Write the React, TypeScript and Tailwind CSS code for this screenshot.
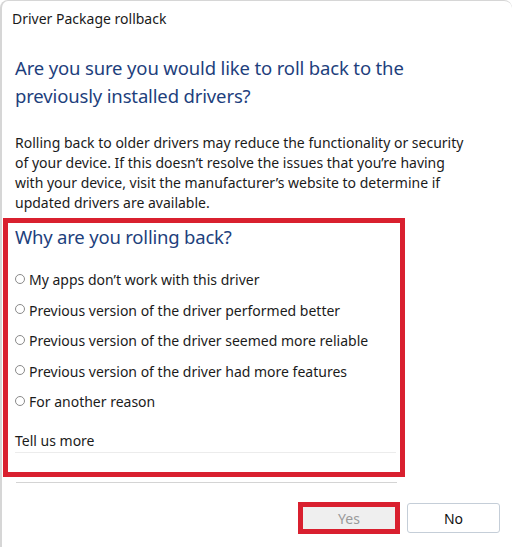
import React from "react";

const reasons = [
  "My apps don\u2019t work with this driver",
  "Previous version of the driver performed better",
  "Previous version of the driver seemed more reliable",
  "Previous version of the driver had more features",
  "For another reason",
];

function Radio({ label }: { label: string }) {
  return (
    <label className="flex items-center gap-[4px] text-[14px] leading-[20px] text-[#1b1b1b]">
      <span className="mt-[-3px] h-[10px] w-[10px] shrink-0 rounded-full border border-[#8a8a8a] bg-white" />
      <span>{label}</span>
    </label>
  );
}

export default function App() {
  return (
    <div
      className="h-[547px] w-[512px] overflow-hidden bg-white"
      style={{ fontFamily: '"Noto Sans", "Open Sans", sans-serif' }}
    >
      <div className="flex h-full flex-col rounded-tl-[8px] rounded-tr-[8px] border-l-2 border-t border-[#d6d6d6] pl-[13px]">
        {/* title bar */}
        <div className="ml-[-3px] pt-[8px] text-[14px] leading-[20px] text-[#1a1a1a]">Driver Package rollback</div>

        {/* question */}
        <h1 className="mt-[25px] text-[18.5px] font-normal leading-[28px] tracking-[-0.15px] text-[#1e3f7d]">
          Are you sure you would like to roll back to the
          <br />
          previously installed drivers?
        </h1>

        <p className="mt-[23px] whitespace-nowrap text-[14px] leading-[20px] text-[#1b1b1b]">
          Rolling back to older drivers may reduce the functionality or security
          <br />
          of your device. If this doesn{"\u2019"}t resolve the issues that you{"\u2019"}re having
          <br />
          with your device, visit the manufacturer{"\u2019"}s website to determine if
          <br />
          updated drivers are available.
        </p>

        {/* reasons */}
        <div className="ml-[-12px] mt-[5px] w-[402px] border-[5px] border-[#d9202f] pl-[7px] pr-[4px]">
          <h2 className="text-[18.5px] font-normal leading-[28px] tracking-[-0.2px] text-[#1e3f7d]">
            Why are you rolling back?
          </h2>

          <div className="mt-[19px] flex flex-col gap-[10.5px]">
            {reasons.map((r) => (
              <Radio key={r} label={r} />
            ))}
          </div>

          <div className="mt-[19px] text-[14px] leading-[20px] text-[#1b1b1b]">Tell us more</div>
          <div className="mt-[1px] h-[20px] border-t border-[#ececec]" />
        </div>

        <div className="ml-[1px] mt-[5px] h-px w-[381px] bg-[#d4d4d4]" />

        {/* buttons */}
        <div className="mt-[19px] flex items-center justify-end gap-[7px] pr-[12px]">
          <div className="flex h-[32px] w-[102px] items-center justify-center border-[5px] border-[#d9202f] bg-[#efefef] text-[14px] text-[#9a9a9a]">
            Yes
          </div>
          <button className="h-[30px] w-[93px] rounded-[3px] border border-[#c5ced8] bg-white text-[14px] text-[#111]">
            No
          </button>
        </div>
      </div>
    </div>
  );
}
